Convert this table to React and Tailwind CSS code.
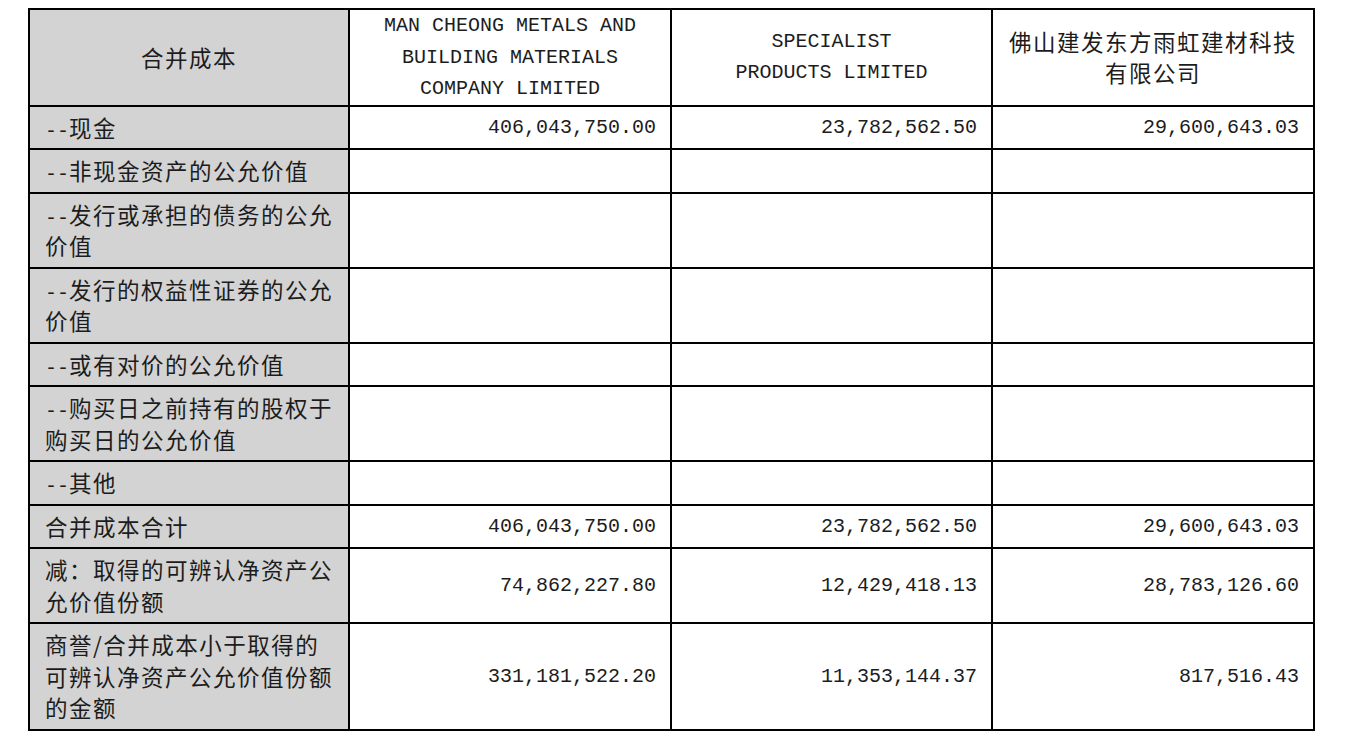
import React from 'react'

const rows = [
    { label: ['--现金'], values: ['406,043,750.00', '23,782,562.50', '29,600,643.03'] },
    { label: ['--非现金资产的公允价值'], values: ['', '', ''] },
    { label: ['--发行或承担的债务的公允', '价值'], values: ['', '', ''] },
    { label: ['--发行的权益性证券的公允', '价值'], values: ['', '', ''] },
    { label: ['--或有对价的公允价值'], values: ['', '', ''] },
    { label: ['--购买日之前持有的股权于', '购买日的公允价值'], values: ['', '', ''] },
    { label: ['--其他'], values: ['', '', ''] },
    { label: ['合并成本合计'], values: ['406,043,750.00', '23,782,562.50', '29,600,643.03'] },
    { label: ['减：取得的可辨认净资产公', '允价值份额'], values: ['74,862,227.80', '12,429,418.13', '28,783,126.60'] },
    { label: ['商誉/合并成本小于取得的', '可辨认净资产公允价值份额', '的金额'], values: ['331,181,522.20', '11,353,144.37', '817,516.43'] },
]

// leading dashes are half width in the source, so set them in the mono face
const LabelLine = ({ text }) => {
    if (text.startsWith('--')) {
        return (
            <div>
                <span className="font-['Liberation_Mono',monospace] text-[20px] leading-none tracking-normal">--</span>
                {text.slice(2)}
            </div>
        )
    }
    return <div>{text}</div>
}

const App = () => {
    return (
        <div className="min-h-[744px] w-full bg-white pt-[8px] pl-[28px]">
            <table className="border-collapse table-fixed w-[1285px] text-[#1c1c1c]">
                <colgroup>
                    <col className="w-[320px]" />
                    <col className="w-[322px]" />
                    <col className="w-[321px]" />
                    <col className="w-[322px]" />
                </colgroup>
                <thead>
                    <tr>
                        <th className="border-2 border-black bg-[#d3d3d3] p-0 h-[96px] text-center align-middle font-normal leading-[31.5px] text-[22.5px] tracking-[1.5px] font-['Noto_Sans_CJK_SC',sans-serif]">
                            合并成本
                        </th>
                        <th className="border-2 border-black p-0 h-[96px] text-center align-middle font-normal leading-[31.5px] text-[20px] font-['Liberation_Mono',monospace]">
                            <div>MAN CHEONG METALS AND</div>
                            <div>BUILDING MATERIALS</div>
                            <div>COMPANY LIMITED</div>
                        </th>
                        <th className="border-2 border-black p-0 h-[96px] text-center align-middle font-normal leading-[31.5px] text-[20px] font-['Liberation_Mono',monospace]">
                            <div>SPECIALIST</div>
                            <div>PRODUCTS LIMITED</div>
                        </th>
                        <th className="border-2 border-black p-0 h-[96px] text-center align-middle font-normal leading-[31.5px] text-[22.5px] tracking-[1.5px] font-['Noto_Sans_CJK_SC',sans-serif]">
                            <div>佛山建发东方雨虹建材科技</div>
                            <div>有限公司</div>
                        </th>
                    </tr>
                </thead>
                <tbody>
                    {rows.map((row, i) => (
                        <tr key={i}>
                            <td className="border-2 border-black bg-[#d3d3d3] py-[5px] pl-[15px] pr-[6px] text-left align-middle leading-[31.5px] text-[22.5px] tracking-[1.5px] font-['Noto_Sans_CJK_SC',sans-serif]">
                                {row.label.map((line, j) => (
                                    <LabelLine key={j} text={line} />
                                ))}
                            </td>
                            {row.values.map((v, j) => (
                                <td key={j} className="border-2 border-black py-[5px] pr-[14px] pl-2 text-right align-middle leading-[31.5px] text-[20px] font-['Liberation_Mono',monospace]">
                                    {v}
                                </td>
                            ))}
                        </tr>
                    ))}
                </tbody>
            </table>
        </div>
    )
}

export default App
